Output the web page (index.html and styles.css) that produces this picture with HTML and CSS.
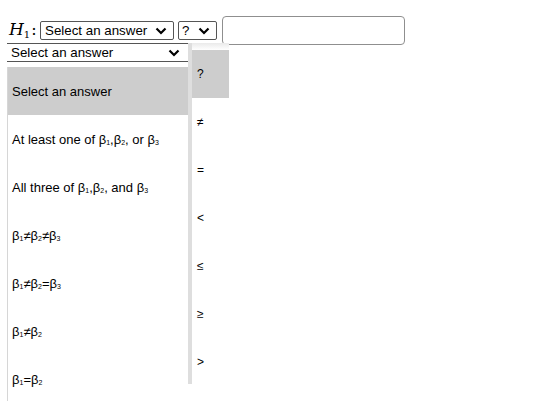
FILE: index.html
```html
<!DOCTYPE html>
<html lang="en">
<head>
    <meta charset="UTF-8">
    <meta name="viewport" content="width=device-width, initial-scale=1.0">
    <title>Hypothesis</title>
    <link rel="stylesheet" href="styles.css">
</head>
<body>

    <!-- Hypothesis row -->
    <div class="row">
        <span class="math"><i>H</i><sub>1</sub>:</span>
        <div class="pick pick-answer">
            <span>Select an answer</span>
            <svg class="chev" viewBox="0 0 12 8"><polyline points="1.5,1.5 6,6 10.5,1.5"/></svg>
        </div>
        <div class="pick pick-op">
            <span>?</span>
            <svg class="chev" viewBox="0 0 12 8"><polyline points="1.5,1.5 6,6 10.5,1.5"/></svg>
        </div>
        <input type="text" class="value">
    </div>

    <!-- Open answer list -->
    <div class="menu">
        <div class="menu-head">
            <span>Select an answer</span>
            <svg class="chev" viewBox="0 0 12 8"><polyline points="1.5,1.5 6,6 10.5,1.5"/></svg>
        </div>
        <ul class="menu-list">
            <li class="active">Select an answer</li>
            <li><span>At least one of β<sub>1</sub>,β<sub>2</sub>, or β<sub>3</sub></span></li>
            <li><span>All three of β<sub>1</sub>,β<sub>2</sub>, and β<sub>3</sub></span></li>
            <li><span>β<sub>1</sub>≠β<sub>2</sub>≠β<sub>3</sub></span></li>
            <li><span>β<sub>1</sub>≠β<sub>2</sub>=β<sub>3</sub></span></li>
            <li><span>β<sub>1</sub>≠β<sub>2</sub></span></li>
            <li><span>β<sub>1</sub>=β<sub>2</sub></span></li>
        </ul>
    </div>

    <!-- Open operator list -->
    <div class="ops">
        <ul class="ops-list">
            <li class="active">?</li>
            <li>≠</li>
            <li>=</li>
            <li>&lt;</li>
            <li>≤</li>
            <li>≥</li>
            <li>&gt;</li>
        </ul>
    </div>

</body>
</html>
```

FILE: styles.css
```css
body {
    margin: 0;
    background: #fff;
    font-family: "Liberation Sans", Arial, sans-serif;
    color: #000;
    position: relative;
    height: 401px;
    overflow: hidden;
}

/* Top row */
.row {
    display: flex;
    align-items: center;
    padding: 16px 0 0 9px;
    height: 29px;
}

.math {
    display: inline-block;
    width: 31px;
    font-family: "DejaVu Serif", "Liberation Serif", serif;
    font-size: 16px;
    line-height: 1;
    white-space: nowrap;
}

.math i {
    font-size: 17px;
}

.math sub {
    font-size: 10px;
    font-style: normal;
    vertical-align: -3px;
    margin-right: 1px;
}

.pick {
    display: flex;
    align-items: center;
    justify-content: space-between;
    height: 17px;
    border: 1px solid #555;
    border-radius: 2px;
    font-size: 13.33px;
    padding: 0 6px 0 4px;
    box-sizing: content-box;
}

.pick-answer {
    width: 122px;
}

.pick-op {
    width: 28px;
    margin-left: 4px;
    padding-left: 3px;
}

.chev {
    width: 12px;
    height: 8px;
    fill: none;
    stroke: #000;
    stroke-width: 2.2;
}

.value {
    margin: 0 0 0 5px;
    width: 181px;
    height: 27px;
    border: 1px solid #8f8f8f;
    border-radius: 4px;
    padding: 0;
    box-sizing: content-box;
}

/* Answer dropdown */
.menu {
    position: absolute;
    left: 7px;
    top: 43px;
    width: 181px;
}

.menu-head {
    display: flex;
    align-items: center;
    justify-content: space-between;
    height: 17px;
    border-top: 1px solid #555;
    border-bottom: 1px solid #555;
    font-size: 13.33px;
    padding: 0 8px 0 4px;
}

.menu-list {
    list-style: none;
    margin: 5px 0 0 0;
    padding: 0;
    border-left: 1px solid #d6d6d6;
}

.menu-list li,
.ops-list li {
    height: 48px;
    display: flex;
    align-items: center;
    font-size: 13px;
    padding-left: 4px;
}

.menu-list li.active,
.ops-list li.active {
    background: #cdcdcd;
}

.menu-list sub {
    font-size: 7px;
    vertical-align: baseline;
    position: relative;
    top: 1px;
    line-height: 0;
}

/* Operator dropdown */
.ops {
    position: absolute;
    left: 188px;
    top: 43px;
    width: 41px;
    height: 341px;
    border-left: 4px solid #dedede;
    background: linear-gradient(#eaeaea, #fff 7px);
    padding-top: 7px;
    box-sizing: border-box;
}

.ops-list {
    list-style: none;
    margin: 0;
    padding: 0;
}

.ops-list li {
    padding-left: 5px;
    font-size: 12px;
}
```
